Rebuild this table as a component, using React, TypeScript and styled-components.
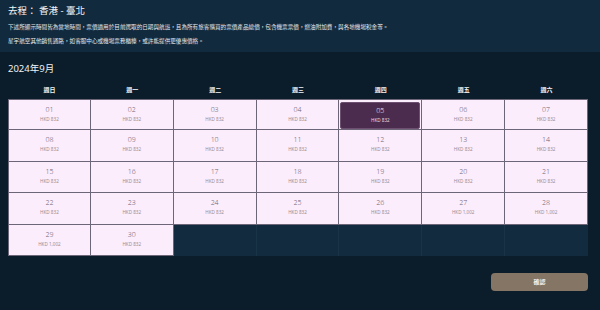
import React from "react";
import styled, { createGlobalStyle } from "styled-components";

const GlobalStyle = createGlobalStyle`
  html, body {
    margin: 0;
    padding: 0;
    background: #0b1d2b;
  }
  body {
    font-family: "Noto Sans", "Noto Sans CJK TC", sans-serif;
  }
`;

const weekDays = ["週日", "週一", "週二", "週三", "週四", "週五", "週六"];

interface Day {
  date: string;
  price: string;
}

const days: Day[] = Array.from({ length: 30 }, (_, i) => {
  const n = i + 1;
  const expensive = n === 27 || n === 28 || n === 29;
  return {
    date: n < 10 ? `0${n}` : `${n}`,
    price: expensive ? "HKD 1,002" : "HKD 832",
  };
});

const SELECTED = "05";

function App(): JSX.Element {
  const cells: (Day | null)[] = [...days];
  while (cells.length < 35) cells.push(null);

  return (
    <Page>
      <GlobalStyle />
      <Header>
        <Title>去程： 香港 - 臺北</Title>
        <Note>
          下述所顯示時間皆為當地時間，票價適用於目前選取的日期與航班，且為所有旅客購買的票價產品總價，包含機票票價，燃油附加費，與各地機場稅金等。
        </Note>
        <Note>星宇航空其他銷售通路，如客服中心或機場票務櫃檯，或許能提供更優惠價格。</Note>
      </Header>
      <Body>
        <Month>2024年9月</Month>
        <WeekRow>
          {weekDays.map((d) => (
            <WeekDay key={d}>{d}</WeekDay>
          ))}
        </WeekRow>
        <Grid>
          {cells.map((c, i) =>
            c ? (
              <DayCell key={i} $col={i % 7} $row={Math.floor(i / 7)}>
                {c.date === SELECTED ? (
                  <Selected>
                    <DateText $active>{c.date}</DateText>
                    <PriceText $active>{c.price}</PriceText>
                  </Selected>
                ) : (
                  <>
                    <DateText>{c.date}</DateText>
                    <PriceText>{c.price}</PriceText>
                  </>
                )}
              </DayCell>
            ) : (
              <EmptyCell key={i} $col={i % 7} />
            )
          )}
        </Grid>
        <Footer>
          <ConfirmButton>確認</ConfirmButton>
        </Footer>
      </Body>
    </Page>
  );
}

export default App;

const Page = styled.div`
  width: 600px;
  height: 310px;
  overflow: hidden;
  background: #0b1d2b;
  color: #fff;
`;

const Header = styled.div`
  height: 52px;
  box-sizing: border-box;
  padding: 4px 8px 0;
  background: #122a3d;
`;

const Title = styled.div`
  font-size: 9.5px;
  line-height: 14px;
  font-weight: 400;
  color: #f2f4f6;
  margin-bottom: 6px;
`;

const Note = styled.div`
  font-size: 5.6px;
  line-height: 7px;
  color: #e6e9ec;
  white-space: nowrap;
  margin-bottom: 7px;
`;

const Body = styled.div`
  padding: 10px 12px 0 8px;
`;

const Month = styled.div`
  font-size: 9.5px;
  line-height: 14px;
  color: #f0f2f4;
  margin-bottom: 7px;
`;

const WeekRow = styled.div`
  display: grid;
  grid-template-columns: repeat(7, 1fr);
  height: 16px;
  align-items: center;
`;

const WeekDay = styled.div`
  text-align: center;
  font-size: 6px;
  font-weight: 700;
  color: #f4f4f6;
  padding-bottom: 3px;
`;

const Grid = styled.div`
  display: grid;
  grid-template-columns: repeat(7, 1fr);
  grid-template-rows: repeat(5, 31.4px);
`;

const DayCell = styled.div<{ $col: number; $row: number }>`
  box-sizing: border-box;
  background: #fcedfc;
  border-right: 1px solid #6c6678;
  border-bottom: 1px solid #6c6678;
  border-left: ${(p) => (p.$col === 0 ? "1px solid #6c6678" : "none")};
  border-top: ${(p) => (p.$row === 0 ? "1px solid #6c6678" : "none")};
  display: flex;
  flex-direction: column;
  align-items: center;
  padding-top: 5px;
`;

const EmptyCell = styled.div<{ $col: number }>`
  box-sizing: border-box;
  background: #122b3e;
  border-right: ${(p) => (p.$col === 6 ? "none" : "1px solid #1a3447")};
`;

const Selected = styled.div`
  box-sizing: border-box;
  margin: -3px 1px 0;
  align-self: stretch;
  height: 28px;
  background: #4b2c4f;
  border: 1px solid #6d4f72;
  border-radius: 2px;
  display: flex;
  flex-direction: column;
  align-items: center;
  padding-top: 3px;
`;

const DateText = styled.div<{ $active?: boolean }>`
  font-size: 7px;
  line-height: 9px;
  font-weight: 300;
  color: ${(p) => (p.$active ? "#ece3ee" : "#6a6474")};
`;

const PriceText = styled.div<{ $active?: boolean }>`
  font-size: 4.6px;
  line-height: 7px;
  margin-top: 2px;
  color: ${(p) => (p.$active ? "#e6dbe8" : "#9a8c90")};
`;

const Footer = styled.div`
  display: flex;
  justify-content: flex-end;
  padding-top: 17px;
`;

const ConfirmButton = styled.button`
  width: 97px;
  height: 18px;
  border: none;
  border-radius: 4px;
  background: #857565;
  color: #f6f2ee;
  font-family: "Noto Sans", "Noto Sans CJK TC", sans-serif;
  font-size: 6px;
  font-weight: 700;
  padding: 0;
`;
